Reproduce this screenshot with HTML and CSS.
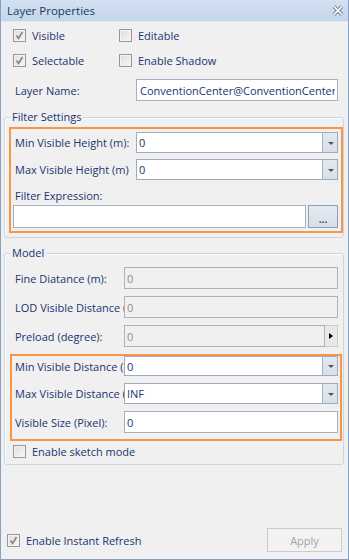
FILE: index.html
```html
<!DOCTYPE html>
<html lang="en">
<head>
    <meta charset="UTF-8">
    <title>Layer Properties</title>
    <link rel="stylesheet" href="styles.css">
</head>
<body>
<div class="window">
    <div class="titlebar">
        <span>Layer Properties</span>
        <svg class="close" width="12" height="11" viewBox="0 0 12 11">
            <path d="M2 1.5 L10 9.5 M10 1.5 L2 9.5" stroke="#7b8697" stroke-width="3.8"/>
            <path d="M2 1.5 L10 9.5 M10 1.5 L2 9.5" stroke="#fff" stroke-width="1.6"/>
        </svg>
    </div>

    <div class="checks">
        <label class="check"><span class="box checked"></span>Visible</label>
        <label class="check"><span class="box"></span>Editable</label>
        <label class="check"><span class="box checked"></span>Selectable</label>
        <label class="check"><span class="box"></span>Enable Shadow</label>
    </div>

    <div class="name-row">
        <label>Layer Name:</label>
        <input class="text" type="text" value="ConventionCenter@ConventionCenter">
    </div>

    <!-- Filter settings -->
    <div class="group filter">
        <span class="legend">Filter Settings</span>
        <div class="orange">
            <div class="field-row">
                <label>Min Visible Height (m):</label>
                <div class="combo"><span>0</span><span class="drop"></span></div>
            </div>
            <div class="field-row gap">
                <label>Max Visible Height (m)</label>
                <div class="combo"><span>0</span><span class="drop"></span></div>
            </div>
            <div class="expr-label">Filter Expression:</div>
            <div class="expr-row">
                <input class="text" type="text" value="">
                <button class="more">...</button>
            </div>
        </div>
    </div>

    <!-- Model settings -->
    <div class="group model">
        <span class="legend">Model</span>
        <div class="mrow">
            <label>Fine Diatance (m):</label>
            <input class="text off" type="text" value="0">
        </div>
        <div class="mrow">
            <label>LOD Visible Distance (m):</label>
            <input class="text off" type="text" value="0">
        </div>
        <div class="mrow">
            <label>Preload (degree):</label>
            <div class="spin">
                <input class="text off" type="text" value="0">
                <span class="spin-btn"></span>
            </div>
        </div>
        <div class="orange">
            <div class="mrow r1">
                <label>Min Visible Distance (m):</label>
                <div class="combo"><span>0</span><span class="drop"></span></div>
            </div>
            <div class="mrow r2">
                <label>Max Visible Distance (m):</label>
                <div class="combo"><span>INF</span><span class="drop"></span></div>
            </div>
            <div class="mrow">
                <label>Visible Size (Pixel):</label>
                <input class="text" type="text" value="0">
            </div>
        </div>
        <label class="check sketch"><span class="box"></span>Enable sketch mode</label>
    </div>

    <div class="spacer"></div>

    <div class="footer">
        <label class="check"><span class="box checked"></span>Enable Instant Refresh</label>
        <button class="apply" disabled>Apply</button>
    </div>
</div>
</body>
</html>
```

FILE: styles.css
```css
* {
    box-sizing: border-box;
}

body {
    margin: 0;
    font-family: "Open Sans", "DejaVu Sans", sans-serif;
    font-size: 11px;
    color: #1b3370;
    background-color: #f0f0f0;
}

.window {
    width: 349px;
    height: 560px;
    display: flex;
    flex-direction: column;
    border: 1px solid #8ba0bc;
    border-top: none;
    background-color: #f0f0f0;
}

.titlebar {
    height: 22px;
    display: flex;
    align-items: center;
    justify-content: space-between;
    padding: 0 4px 0 6px;
    background: linear-gradient(#d4e2f2, #c2d5eb);
    border-bottom: 1px solid #e2eaf4;
    font-size: 11.5px;
    color: #1e395b;
}

/* checkboxes */
.checks {
    display: grid;
    grid-template-columns: 106px auto;
    grid-auto-rows: 25px;
    margin: 1px 0 0 12px;
}

.check {
    display: flex;
    align-items: center;
    gap: 6px;
    white-space: nowrap;
}

.box {
    width: 13px;
    height: 13px;
    flex: none;
    border: 1px solid #979797;
    background: linear-gradient(135deg, #dedede, #f7f7f7);
    box-shadow: inset 0 0 0 1px #f2f2f2;
}

.box.checked {
    background-image: url("data:image/svg+xml,%3Csvg xmlns='http://www.w3.org/2000/svg' width='11' height='11'%3E%3Cpath d='M2.5 5.5 L4.5 8.5 L8.5 2' fill='none' stroke='%23868686' stroke-width='1.6'/%3E%3C/svg%3E"), linear-gradient(135deg, #dedede, #f7f7f7);
}

.name-row {
    display: flex;
    align-items: center;
    height: 22px;
    margin: 6px 10px 0 14px;
}

.name-row label {
    flex: 1;
}

.text {
    height: 22px;
    margin: 0;
    padding: 0 2px;
    border: 1px solid #a3b1c2;
    background-color: #fff;
    font-family: inherit;
    font-size: 11px;
    color: #1b3370;
    outline: none;
}

.name-row .text {
    width: 202px;
    padding-left: 3px;
}

.text.off {
    border-color: #adb2b8;
    background-color: #f0f0f0;
    color: #8d8d8d;
}

/* group boxes */
.group {
    position: relative;
    margin: 16px 4px 0 3px;
    border: 1px solid #cdd6df;
    border-radius: 3px;
    box-shadow: inset 1px 1px 0 #fcfcfc;
}

.legend {
    position: absolute;
    top: -9px;
    left: 5px;
    padding: 0 2px;
    line-height: 16px;
    background-color: #f0f0f0;
}

.orange {
    border: 2px solid #f79646;
}

.filter .orange {
    margin: 9px 0 4px 4px;
    padding: 3px 3px 3px 2px;
}

.field-row {
    display: flex;
    align-items: center;
    height: 21px;
}

.field-row.gap {
    margin-top: 6px;
}

.field-row label {
    flex: 1;
    padding-left: 2px;
    white-space: nowrap;
}

.combo {
    width: 202px;
    height: 100%;
    display: flex;
    align-items: center;
    border: 1px solid #9dabbd;
    background-color: #fff;
    padding-left: 2px;
}

.combo span:first-child {
    flex: 1;
}

.drop {
    width: 15px;
    height: 100%;
    border-left: 1px solid #a7b4c5;
    background: linear-gradient(#e3e9f0, #d7dfe8);
    position: relative;
}

.drop::after {
    content: "";
    position: absolute;
    left: 5px;
    top: 50%;
    margin-top: -1px;
    border-left: 3px solid transparent;
    border-right: 3px solid transparent;
    border-top: 3px solid #4b5564;
}

.expr-label {
    height: 25px;
    display: flex;
    align-items: flex-end;
    padding: 0 0 1px 2px;
    line-height: 16px;
}

.expr-row {
    display: flex;
    gap: 2px;
    height: 23px;
}

.expr-row .text {
    width: 293px;
    height: 23px;
}

.more {
    width: 30px;
    height: 23px;
    padding: 0 0 3px;
    border: 1px solid #8fa0b5;
    background: linear-gradient(#e6ecf3, #d5dde7);
    font-family: inherit;
    font-size: 10px;
    font-weight: bold;
    line-height: 1;
    color: #3b4a5e;
    display: flex;
    align-items: flex-end;
    justify-content: center;
}

.model {
    margin-top: 15px;
    padding: 13px 0 3px;
}

.mrow {
    display: flex;
    align-items: center;
    height: 22px;
    margin-bottom: 7px;
    padding: 0 5px 0 10px;
}

.mrow label {
    width: 109px;
    flex: none;
    white-space: nowrap;
    overflow: hidden;
}

.mrow .text,
.mrow .combo,
.spin {
    width: 214px;
}

.spin {
    display: flex;
    height: 22px;
}

.spin .text {
    width: 201px;
}

.spin-btn {
    width: 13px;
    border: 1px solid #cdcdcd;
    border-left: none;
    background-color: #e8e8e8;
    position: relative;
}

.spin-btn::after {
    content: "";
    position: absolute;
    left: 4px;
    top: 50%;
    margin-top: -3px;
    border-top: 3px solid transparent;
    border-bottom: 3px solid transparent;
    border-left: 4px solid #000;
}

.model .orange {
    margin: 0 1px 0 5px;
    padding: 0 0 6px;
}

.model .orange .mrow {
    padding: 0 2px 0 3px;
    margin-bottom: 0;
}

.model .orange .r1 {
    height: 20px;
    margin-bottom: 7px;
}

.model .orange .r2 {
    height: 21px;
    margin-bottom: 7px;
}

.sketch {
    height: 19px;
    margin: 1px 0 0 8px;
}

.spacer {
    flex: 1;
}

.footer {
    display: flex;
    align-items: center;
    justify-content: space-between;
    padding: 0 6px 7px 6px;
}

.apply {
    width: 75px;
    height: 24px;
    border: 1px solid #cacaca;
    background-color: #f2f2f2;
    font-family: inherit;
    font-size: 11px;
    color: #a3a3a3;
}
```
